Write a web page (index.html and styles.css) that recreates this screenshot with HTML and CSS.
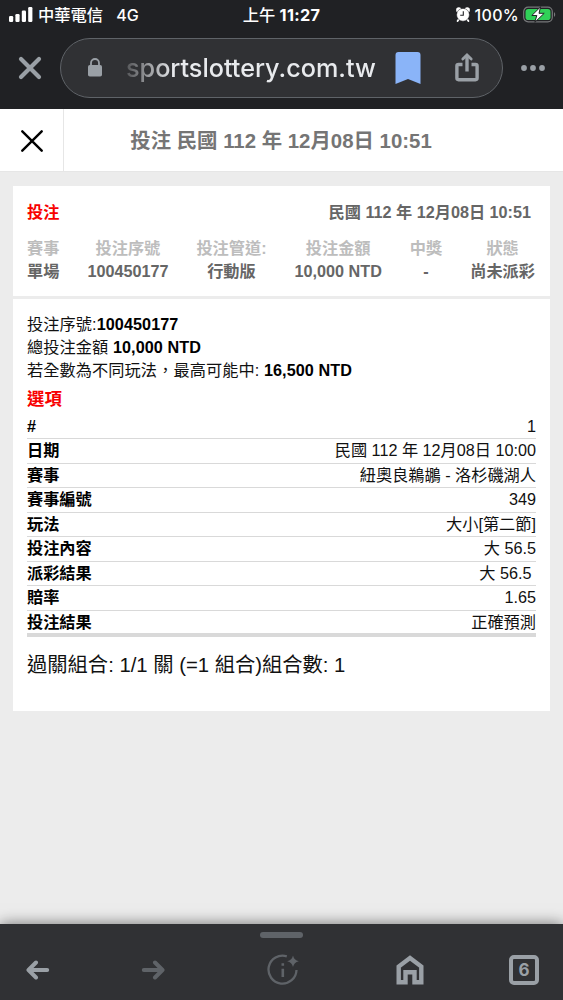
FILE: index.html
```html
<!DOCTYPE html>
<html lang="zh-Hant">
<head>
  <meta charset="UTF-8">
  <meta name="viewport" content="width=device-width, initial-scale=1.0">
  <title>投注</title>
  <link rel="stylesheet" href="styles.css">
</head>

<body>
  <!-- status bar -->
  <div class="status">
    <div class="status-left">
      <svg class="signal" width="24" height="15" viewBox="0 0 24 15" fill="#fff">
        <rect x="0" y="9" width="4.2" height="6" rx="1.2"/>
        <rect x="6.4" y="7" width="4.2" height="8" rx="1.2"/>
        <rect x="12.8" y="3.5" width="4.2" height="11.5" rx="1.2"/>
        <rect x="19.2" y="0" width="4.2" height="15" rx="1.2"/>
      </svg>
      <span class="carrier">中華電信</span>
      <span class="network">4G</span>
    </div>
    <div class="clock"><span>上午</span> <b>11:27</b></div>
    <div class="status-right">
      <svg width="14" height="15" viewBox="0 0 14 15">
        <circle cx="2.8" cy="3" r="2.7" fill="#fff"/>
        <circle cx="11.2" cy="3" r="2.7" fill="#fff"/>
        <path d="M2.8 12.3l-1.2 1.8M11.2 12.3l1.2 1.8" stroke="#fff" stroke-width="1.8" stroke-linecap="round"/>
        <circle cx="7" cy="7.8" r="6.4" fill="#fff" stroke="#202124" stroke-width=".5"/>
        <path d="M7.3 4.2v4H4.2" fill="none" stroke="#202124" stroke-width="1.1"/>
      </svg>
      <span class="percent">100%</span>
      <svg class="battery" width="33" height="17" viewBox="0 0 33 17">
        <rect x=".7" y="1.2" width="28.6" height="14.6" rx="4.5" fill="none" stroke="#77787a" stroke-width="1.2"/>
        <path d="M31 6.2c1.6.6 1.6 4 0 4.6z" fill="#77787a"/>
        <rect x="2.5" y="3" width="25" height="11" rx="2.8" fill="#30d158"/>
        <path d="M17.6.8L8.8 9.5h5l-2 6.8 9.4-9h-5.2z" fill="#fff" stroke="#202124" stroke-width="1"/>
      </svg>
    </div>
  </div>

  <!-- address bar -->
  <div class="toolbar">
    <svg class="stop" width="24" height="24" viewBox="0 0 24 24" stroke="#9aa0a6" stroke-width="4.2" stroke-linecap="round">
      <path d="M3 3l18 18M21 3L3 21"/>
    </svg>
    <div class="address">
      <svg class="lock" width="16" height="20" viewBox="0 0 16 20">
        <rect x="1" y="7" width="14" height="11.5" rx="1.8" fill="#9aa0a6"/>
        <path d="M4 8V5a4 4 0 0 1 8 0v3" fill="none" stroke="#9aa0a6" stroke-width="1.8"/>
      </svg>
      <span class="url">sportslottery.com.tw</span>
      <svg class="bookmark" width="26" height="32" viewBox="0 0 26 32" fill="#8ab4f8">
        <path d="M.5 3a3 3 0 0 1 3-3h19a3 3 0 0 1 3 3v29L13 27 .5 32z"/>
      </svg>
      <svg class="share" width="24" height="29" viewBox="0 0 24 29" fill="none" stroke="#9aa0a6" stroke-width="3.4">
        <path d="M7.5 11.5h-4a1.6 1.6 0 0 0-1.6 1.6v12a1.6 1.6 0 0 0 1.6 1.6h17a1.6 1.6 0 0 0 1.6-1.6v-12a1.6 1.6 0 0 0-1.6-1.6h-4"/>
        <path d="M12 18.5V4"/>
        <path d="M7.8 6L12 2l4.2 4" stroke-width="2.8" stroke-linecap="round"/>
      </svg>
    </div>
    <svg class="more" width="24" height="6" viewBox="0 0 24 6" fill="#9aa0a6">
      <circle cx="3" cy="3" r="2.9"/>
      <circle cx="12" cy="3" r="2.9"/>
      <circle cx="21" cy="3" r="2.9"/>
    </svg>
  </div>

  <header class="page-header">
    <div class="close">
      <svg width="22" height="22" viewBox="0 0 22 22" stroke="#000" stroke-width="2.4" stroke-linecap="round">
        <path d="M1.3 1.3l19.4 19.4M20.7 1.3L1.3 20.7"/>
      </svg>
    </div>
    <h1>投注 民國 112 年 12月08日 10:51</h1>
  </header>

  <main>
    <!-- ticket summary -->
    <section class="card summary">
      <div class="summary-top">
        <span class="red">投注</span>
        <span>民國 112 年 12月08日 10:51</span>
      </div>
      <div class="cols">
        <div><small>賽事</small>單場</div>
        <div><small>投注序號</small>100450177</div>
        <div><small>投注管道:</small>行動版</div>
        <div><small>投注金額</small>10,000 NTD</div>
        <div><small>中獎</small>-</div>
        <div><small>狀態</small>尚未派彩</div>
      </div>
    </section>

    <!-- ticket details -->
    <section class="card details">
      <p>投注序號:<b>100450177</b></p>
      <p>總投注金額 <b>10,000 NTD</b></p>
      <p>若全數為不同玩法，最高可能中: <b>16,500 NTD</b></p>
      <h2 class="red">選項</h2>
      <dl>
        <div><dt>#</dt><dd>1</dd></div>
        <div><dt>日期</dt><dd>民國 112 年 12月08日 10:00</dd></div>
        <div><dt>賽事</dt><dd>紐奧良鵜鶘 - 洛杉磯湖人</dd></div>
        <div><dt>賽事編號</dt><dd>349</dd></div>
        <div><dt>玩法</dt><dd>大小[第二節]</dd></div>
        <div><dt>投注內容</dt><dd>大 56.5</dd></div>
        <div><dt>派彩結果</dt><dd>大 56.5&nbsp;</dd></div>
        <div><dt>賠率</dt><dd>1.65</dd></div>
        <div><dt>投注結果</dt><dd>正確預測</dd></div>
      </dl>
      <div class="combo">過關組合: 1/1 關 (=1 組合)組合數: 1</div>
    </section>
  </main>

  <!-- bottom navigation -->
  <footer>
    <div class="handle"></div>
    <nav>
      <svg width="24" height="20" viewBox="0 0 24 20" fill="none" stroke="#9aa0a6" stroke-width="4" stroke-linecap="round" stroke-linejoin="round">
        <path d="M21.2 10H3M10 2.5L2.5 10l7.5 7.5"/>
      </svg>
      <svg width="24" height="20" viewBox="0 0 24 20" fill="none" stroke="#5f6368" stroke-width="4" stroke-linecap="round" stroke-linejoin="round">
        <path d="M2.8 10H21M14 2.5l7.5 7.5-7.5 7.5"/>
      </svg>
      <svg width="32" height="32" viewBox="0 0 32 32" fill="none" stroke="#5f6368">
        <path d="M19.8 2.3A14 14 0 1 0 29.5 16" stroke-width="2.3"/>
        <path d="M15.8 14.8v8.3M15.8 9.2v2.5" stroke-width="2.6"/>
        <path d="M26 1.5q1 4.6 5.8 5.8-4.8 1.2-5.8 5.8-1-4.6-5.8-5.8 4.8-1.2 5.8-5.8z" fill="#5f6368" stroke="none"/>
      </svg>
      <svg width="28" height="30" viewBox="0 0 28 30" fill="none" stroke="#9aa0a6" stroke-width="4.4">
        <path d="M2.7 27.3V11.5L14 3l11.3 8.5v15.8h-6.8v-10h-9v10z"/>
      </svg>
      <div class="tabs">6</div>
    </nav>
  </footer>
</body>
</html>
```

FILE: styles.css
```css
:root {
  --dark: #202124;
  --bar: #303134;
  --grey: #9aa0a6;
  --page: #ececec;
  --line: #d9d9d9;
}
* {box-sizing: border-box;}
body{margin:0;height:1000px;display:flex;flex-direction:column;overflow:hidden;background:var(--page);color:#111;font:16.2px/23px "Liberation Sans","Noto Sans CJK TC",sans-serif;}
svg{display:block;flex:none;}
h1,h2,p,dl,dd{margin:0;}
.red{color:#f80000;}

/* status bar */
.status{height:30px;flex:none;display:grid;grid-template-columns:1fr auto 1fr;align-items:center;padding:0 7px 0 9px;background:var(--dark);color:#fff;font-family:Inter,"Noto Sans CJK TC",sans-serif;font-weight:500;line-height:28px;}
.status-left,.status-right{display:flex;align-items:center;}
.status-right{justify-content:flex-end;}
.signal{margin-top:-2px;}
.carrier{margin-left:5px;font-size:16.3px;}
.network{margin-left:13px;font-size:16px;}
.clock{font-size:16.3px;padding-right:2px;}
.clock b{font-weight:700;letter-spacing:.3px;}
.percent{margin:0 4px 0 6px;font-size:16px;letter-spacing:.3px;}
.battery,.status-right svg:first-child{margin-top:-2px;}
.status-right svg:first-child{margin-right:-1px;}

/* address bar */
.toolbar{height:79px;flex:none;display:flex;align-items:center;padding:0 18px 4px 18px;background:var(--dark);}
.address{width:443px;height:60px;margin:0 18px;display:flex;align-items:center;flex:none;background:var(--bar);border:1px solid #5f6368;border-radius:30px;}
.lock{margin-left:26px;}
.url{width:251px;margin-left:23px;font:500 25.2px/36px Inter,sans-serif;color:#e8eaed;white-space:nowrap;-webkit-mask-image:linear-gradient(90deg,#0003,#000 48px);mask-image:linear-gradient(90deg,#0003,#000 48px);}
.bookmark{margin-left:18px;}
.share{margin-left:34px;}

.page-header{height:63px;flex:none;display:flex;background:#fff;border-bottom:1px solid #e6e6e6;}
.close{width:64px;padding:21px 0 0 21px;border-right:1px solid #e6e6e6;}
.page-header h1{flex:1;padding-right:65px;text-align:center;font-size:20.4px;line-height:64px;color:#757575;}

main{flex:1;padding:14px 13px;}
.card{background:#fff;}
.summary{height:110px;padding:15px 15px 0 14px;margin-bottom:3px;font-weight:bold;color:#666;}
.summary-top{display:flex;justify-content:space-between;padding-right:4px;}
.cols{display:flex;justify-content:space-between;margin-top:13px;text-align:center;}
.cols small{display:block;font-size:16.2px;color:#bdbdbd;}

.details{height:412px;padding:14px 14px 0 14px;}
.details p{letter-spacing:.08px;}
.details b{color:#000;}
.details h2{margin-top:5px;font-size:17.4px;line-height:25px;}
dl{margin-top:3px;}
dl div{display:flex;justify-content:space-between;height:24.45px;border-bottom:1px solid var(--line);}
dl div:last-child{height:26px;border-bottom-width:4px;}
dt{font-weight:bold;color:#000;}
.combo{margin-top:14px;font-size:20.3px;line-height:28px;}

/* bottom navigation */
footer{height:76px;flex:none;padding-top:8px;background:var(--bar);box-shadow:0 0 14px #0008;}
.handle{width:43px;height:6px;margin:0 auto;border-radius:3px;background:#5f6368;}
nav{height:62px;display:grid;grid-template-columns:76px 154px 105px 150px 78px;place-items:center;padding-top:2px;}
.tabs{width:30px;height:30px;border:4px solid var(--grey);border-radius:5px;text-align:center;color:var(--grey);font:700 17px/22px Inter,sans-serif;}
```
